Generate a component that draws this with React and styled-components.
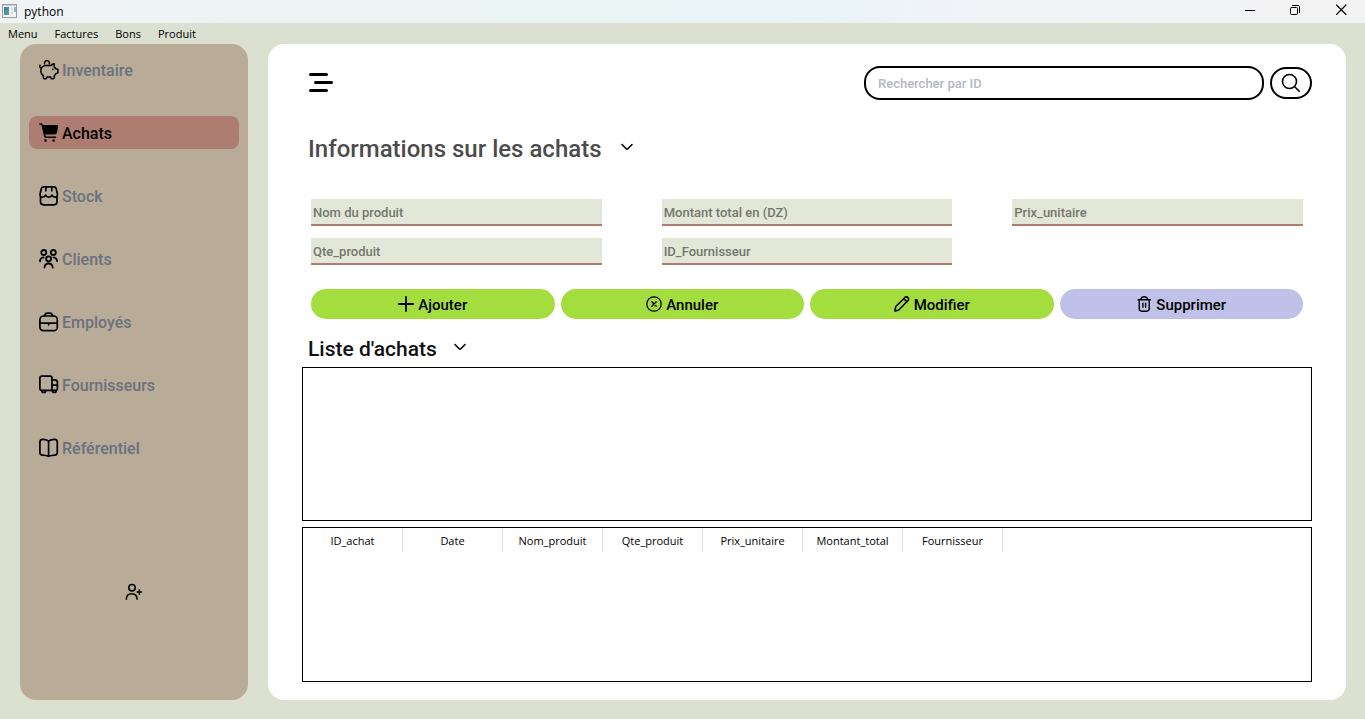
import React from "react";
import styled, { createGlobalStyle } from "styled-components";

const colors = {
  page: "#dce0d0",
  sidebar: "#b8ab98",
  accent: "#ad7d72",
  muted: "#6b717d",
  green: "#a3de3e",
  lilac: "#c0c1e8",
  field: "#e3e7d8",
};

const din = `Roboto, "Liberation Sans", sans-serif`;
const system = `"Open Sans", "Noto Sans", sans-serif`;

const GlobalStyle = createGlobalStyle`
  * { box-sizing: border-box; }
  body { margin: 0; background: ${colors.page}; font-family: ${din}; color: #000; }
  button, input { font: inherit; color: inherit; }
  svg { display: block; flex: none; }
`;

const Window = styled.div`
  min-height: 100vh;
  display: flex;
  flex-direction: column;
`;

const TitleBar = styled.header`
  height: 23px;
  display: flex;
  align-items: center;
  padding: 0 0 0 2px;
  background: linear-gradient(90deg, #f0f3f3 0%, #eaf4f5 45%, #ebf4f7 62%, #f1f3f7 72%, #f3f3f3 100%);
  font-family: ${system};
  font-size: 12px;
`;

const WindowName = styled.span`
  flex: 1;
  padding-left: 6px;
`;

const WindowButton = styled.button`
  width: 46px;
  height: 23px;
  padding: 0 0 3px;
  border: 0;
  background: none;
  display: flex;
  align-items: center;
  justify-content: center;
`;

const MenuBar = styled.nav`
  height: 21px;
  display: flex;
  align-items: center;
  gap: 17px;
  padding: 0 8px;
  font-family: ${system};
  font-size: 11px;
`;

const MenuLink = styled.a`
  color: #000;
  text-decoration: none;
`;

const Body = styled.div`
  flex: 1;
  display: flex;
  gap: 20px;
  padding: 0 19px 19px 20px;
`;

const Sidebar = styled.aside`
  flex: 0 0 228px;
  display: flex;
  flex-direction: column;
  align-items: center;
  padding: 9px;
  border-radius: 16px;
  background: ${colors.sidebar};
`;

const SideNav = styled.nav`
  align-self: stretch;
  display: flex;
  flex-direction: column;
  gap: 30px;
`;

const SideLink = styled.a`
  height: 33px;
  display: flex;
  align-items: center;
  gap: 3px;
  padding: 0 10px;
  border-radius: 8px;
  background: ${(p) => (p.$active ? colors.accent : "transparent")};
  color: ${(p) => (p.$active ? "#000" : colors.muted)};
  font-size: 16px;
  font-weight: 500;
  text-decoration: none;

  svg { color: #000; }
`;

const Label = styled.span`
  padding-top: 2px;
`;

const AddUser = styled.button`
  margin: auto 0 84px;
  padding: 6px;
  border: 0;
  background: none;
`;

const Main = styled.main`
  flex: 1;
  min-width: 0;
  display: flex;
  flex-direction: column;
  padding: 22px 34px 18px;
  border-radius: 16px;
  background: #fff;
`;

const TopRow = styled.div`
  display: flex;
  align-items: center;
  gap: 6px;
`;

const IconButton = styled.button`
  display: flex;
  padding: 0;
  border: 0;
  background: none;
`;

const MenuToggle = styled(IconButton)`
  margin: 0 auto 0 7px;
`;

const SearchInput = styled.input`
  width: 400px;
  height: 34px;
  padding: 0 12px;
  border: 2px solid #000;
  border-radius: 16px;
  background: #fff;
  font-size: 13px;
  font-weight: 500;
  outline: none;

  &::placeholder { color: #b5b8bf; opacity: 1; }
`;

const SearchButton = styled.button`
  width: 42px;
  height: 32px;
  display: flex;
  align-items: center;
  justify-content: center;
  padding: 0;
  border: 2px solid #000;
  border-radius: 16px;
  background: #fff;
`;

const HeadingRow = styled.div`
  display: flex;
  align-items: center;
  gap: ${(p) => (p.$small ? 16 : 18)}px;
  padding: 0 6px;
  margin: ${(p) => (p.$small ? "16px 0 4px" : "33px 0 34px")};
`;

const PageTitle = styled.h1`
  margin: 0;
  color: #4c4c4c;
  font-size: 24px;
  font-weight: 500;
  line-height: 32px;
`;

const ListTitle = styled.h2`
  margin: 0;
  color: #111;
  font-size: 21px;
  font-weight: 500;
  line-height: 28px;
`;

const Fields = styled.div`
  display: grid;
  grid-template-columns: repeat(3, 1fr);
  gap: 12px 60px;
  margin: 0 9px 24px;
`;

const Field = styled.input`
  width: 100%;
  min-width: 0;
  height: 27px;
  padding: 2px 2px 0;
  border: 0;
  border-bottom: 2px solid ${colors.accent};
  background: ${colors.field};
  font-size: 13px;
  font-weight: 500;
  outline: none;

  &::placeholder { color: #74776d; opacity: 1; }
`;

const Actions = styled.div`
  display: grid;
  grid-template-columns: repeat(4, 1fr);
  gap: 6px;
  margin: 0 9px;
`;

const ActionButton = styled.button`
  height: 30px;
  display: flex;
  align-items: center;
  justify-content: center;
  gap: 4px;
  padding: 0;
  border: 0;
  border-radius: 15px;
  background: ${(p) => (p.$lilac ? colors.lilac : colors.green)};
  font-size: 15px;
  font-weight: 500;
`;

const Panels = styled.div`
  flex: 1;
  display: grid;
  grid-template-rows: minmax(100px, 154fr) minmax(100px, 155fr);
  gap: 6px;
`;

const Panel = styled.section`
  overflow: hidden;
  border: 1px solid #000;
`;

const Table = styled.table`
  width: 700px;
  table-layout: fixed;
  border-collapse: separate;
  border-spacing: 0;
  font-family: ${system};
  font-size: 11px;
`;

const HeadCell = styled.th`
  height: 24px;
  padding: 0;
  border-right: 1px solid #e2e2e2;
  font-weight: 400;
  text-align: center;
`;

const Icon = ({ w = 20, h = 20, sw = 2, children }) => (
  <svg
    width={w}
    height={h}
    viewBox={`0 0 ${w} ${h}`}
    fill="none"
    stroke="currentColor"
    strokeWidth={sw}
    strokeLinecap="round"
    strokeLinejoin="round"
    aria-hidden="true"
  >
    {children}
  </svg>
);

const PiggyIcon = () => (
  <Icon sw={1.5}>
    <path d="M5.6 3.800A2.500 2.500 0 1 1 10.400 3.800" />
    <path d="M1 5.200C.3 6.600 1 7.900 2.500 7.900" />
    <path d="M7.200 5.500h5c.8-1.100 1.700-1.600 3-1.700v3c.9.7 1.400 1.500 1.700 2.300h1.300c.5 0 .7.200.7.700v2.600c0 .5-.2.800-.7.900l-1.400.4c-.4.9-.9 1.600-1.600 2.200v1.900c0 .7-.3 1-1 1h-1.200c-.5 0-.8-.2-1-.7l-.4-1H7.900l-.4 1c-.2.5-.5.7-1 .7H5.400c-.7 0-1-.3-1-1v-1.900C2.700 14.700 1.800 13 1.800 10.900c0-3.100 2.300-5.400 5.400-5.400z" />
    <path d="M13.900 9.100v.3" />
  </Icon>
);

const CartIcon = () => (
  <Icon sw={1.6}>
    <path d="M.9 1h1.200c.6 0 .9.3 1.100.9l2.700 11.300c.1.700.5 1 1.200 1h9.500" />
    <path d="M4 2.900h14.300l-.9 6c-.2 1.300-.9 1.900-2.200 1.900H5.800z" fill="currentColor" />
    <circle cx="6.500" cy="17.500" r="1.300" fill="currentColor" stroke="none" />
    <circle cx="14.600" cy="17.500" r="1.300" fill="currentColor" stroke="none" />
  </Icon>
);

const StoreIcon = () => (
  <Icon sw={1.7}>
    <path d="M4.600.9h10.300c1.200 0 2 .6 2.300 1.800l1.200 5.200c.4 1.800-.8 3.200-2.400 3.200-1.500 0-2.400-.8-3-2-.7 1.300-1.700 2-3.200 2s-2.600-.7-3.200-2c-.6 1.200-1.600 2-3.100 2-1.700 0-2.800-1.400-2.400-3.200l1.200-5.200C2.600 1.500 3.400.9 4.600.9z" />
    <path d="M6.800 1v3.700M12.800 1v3.700" />
    <path d="M1.500 10.500v5.300c0 2 1 3 3 3h10.500c2 0 3-1 3-3v-5.300" />
  </Icon>
);

const PeopleIcon = () => (
  <Icon sw={1.8}>
    <circle cx="4.800" cy="3.500" r="2.500" />
    <circle cx="14.300" cy="3.500" r="2.500" />
    <circle cx="9.600" cy="9.800" r="2.500" />
    <path d="M1 12.300C1.100 9.900 2.600 8.600 4.700 8.400M14.400 8.400c2.100.2 3.500 1.500 3.700 3.900" />
    <path d="M5.500 18.500c.2-2.700 1.700-4 4.100-4s3.900 1.300 4.100 4" />
  </Icon>
);

const BriefcaseIcon = () => (
  <Icon sw={1.7}>
    <rect x=".9" y="4" width="17.400" height="14.700" rx="3.500" />
    <path d="M5.600 3.800C6.100 2 7 1.200 8.400 1.200h2.400c1.400 0 2.300.8 2.800 2.600" />
    <path d="M1 11.200h17.200M9.600 11.800v1" />
  </Icon>
);

const TruckIcon = () => (
  <Icon sw={1.7}>
    <path d="M2.500 15.300c-1 0-1.600-.6-1.600-1.600V3c0-1.300.7-1.900 1.900-1.900h8.300c1.200 0 1.900.6 1.900 1.900v12.300z" />
    <path d="M13 4.800h2.800c1.700 0 2.600.9 2.600 2.600v6.300c0 1-.6 1.600-1.600 1.600H13M13.200 10.200h5" />
    <path d="M2.700 15.500a2 2 0 0 0 4 0M13.300 15.500a2 2 0 0 0 4 0" />
  </Icon>
);

const BookIcon = () => (
  <Icon sw={1.7}>
    <path d="M9.600 3.200C8 1.800 6 1.200 3.600 1.300 1.900 1.400.9 2.300.9 4v10.400c0 1.700.9 2.600 2.600 2.700 2.300.1 4.200.5 6.100 1.200 1.900-.7 3.800-1.100 6.100-1.200 1.700-.1 2.600-1 2.600-2.700V4c0-1.700-1-2.600-2.700-2.700C13.200 1.200 11.200 1.800 9.600 3.200zM9.600 3.200v15" />
  </Icon>
);

const AddUserIcon = () => (
  <Icon w={18} h={18} sw={1.5}>
    <circle cx="7" cy="4.800" r="3.200" />
    <path d="M1.300 16.300c.1-3.600 2.100-5.500 5.400-5.500s5.300 1.900 5.400 5.500" />
    <path d="M14.300 6.800v4.400M12.100 9h4.400" />
  </Icon>
);

const BarsIcon = () => (
  <Icon w={24} h={20} sw={3}>
    <path d="M1.500 1.500h16M6.500 9.500h16M1.500 17.500h16" />
  </Icon>
);

const SearchIcon = () => (
  <Icon w={20} h={20} sw={1.6}>
    <circle cx="8.500" cy="8.500" r="7" />
    <path d="M13.700 13.700l4.500 4.500" />
  </Icon>
);

const ChevronIcon = () => (
  <Icon w={14} h={14} sw={1.6}>
    <path d="M2 2.500l4.200 4.200c.5.500 1.100.5 1.600 0L12 2.500" />
  </Icon>
);

const PlusIcon = () => (
  <Icon w={16} h={16} sw={1.8}>
    <path d="M8 .9v14.200M.9 8h14.200" />
  </Icon>
);

const CancelIcon = () => (
  <Icon w={16} h={16} sw={1.3}>
    <circle cx="8" cy="8" r="7.200" />
    <path d="M5.800 5.800l4.400 4.400M10.200 5.800l-4.400 4.400" />
  </Icon>
);

const PencilIcon = () => (
  <Icon w={16} h={16} sw={1.6}>
    <path d="M1 15l.5-3.500c.1-.6.400-1.100.8-1.500L10.700 1.700c1-1 2.300-1.100 3.200-.1 1 .9.9 2.200-.1 3.200L5.500 13.300c-.4.4-.9.700-1.500.9z" />
    <path d="M9.800 2.800l3 3" />
  </Icon>
);

const TrashIcon = () => (
  <Icon w={16} h={16} sw={1.4}>
    <path d="M2 3.700h12.400M4.700 3.400C5.300 1.600 6.300.8 8.200.8s2.900.8 3.500 2.600" />
    <path d="M3.200 4v8.600c0 1.700.9 2.600 2.600 2.600h4.800c1.700 0 2.600-.9 2.600-2.600V4M6.900 7.300v4M9.600 7.300v4" />
  </Icon>
);

const AppIcon = () => (
  <svg width="16" height="15" viewBox="0 0 16 15" aria-hidden="true">
    <defs>
      <linearGradient id="pane" x1="0" y1="0" x2="1" y2="1">
        <stop offset="0" stopColor="#4273b4" />
        <stop offset="1" stopColor="#55ad83" />
      </linearGradient>
    </defs>
    <rect x=".5" y=".5" width="14" height="13" fill="#f4f5f6" stroke="#999ea3" />
    <rect x="1" y="1" width="13" height="1" fill="#c9d3dc" />
    <rect x="2" y="3" width="5" height="8" fill="url(#pane)" />
    <rect x="9" y="3" width="2" height="8" fill="#e2e3e6" />
    <rect x="12" y="3" width="2" height="5" fill="#8fb5bd" />
  </svg>
);

const sections = [
  ["Inventaire", PiggyIcon],
  ["Achats", CartIcon],
  ["Stock", StoreIcon],
  ["Clients", PeopleIcon],
  ["Employés", BriefcaseIcon],
  ["Fournisseurs", TruckIcon],
  ["Référentiel", BookIcon],
];

const fields = ["Nom du produit", "Montant total en (DZ)", "Prix_unitaire", "Qte_produit", "ID_Fournisseur"];

const actions = [
  ["Ajouter", PlusIcon],
  ["Annuler", CancelIcon],
  ["Modifier", PencilIcon],
  ["Supprimer", TrashIcon],
];

const columns = ["ID_achat", "Date", "Nom_produit", "Qte_produit", "Prix_unitaire", "Montant_total", "Fournisseur"];

export default function App() {
  return (
    <Window>
      <GlobalStyle />
      <TitleBar>
        <AppIcon />
        <WindowName>python</WindowName>
        <WindowButton aria-label="Réduire">
          <Icon w={12} h={12} sw={1}><path d="M1 6.500h10" strokeLinecap="butt" /></Icon>
        </WindowButton>
        <WindowButton aria-label="Restaurer">
          <Icon w={12} h={12} sw={1}>
            <rect x=".5" y="3.500" width="7" height="7" rx="1" />
            <path d="M2.500 1.500h5.500c1 0 1.500.5 1.500 1.500v5.500" />
          </Icon>
        </WindowButton>
        <WindowButton aria-label="Fermer">
          <Icon w={12} h={12} sw={1.1}><path d="M.5 1l9.500 9.500M10 1L.5 10.500" /></Icon>
        </WindowButton>
      </TitleBar>
      <MenuBar>
        {["Menu", "Factures", "Bons", "Produit"].map((name) => (
          <MenuLink key={name} href="#">{name}</MenuLink>
        ))}
      </MenuBar>
      <Body>
        <Sidebar>
          <SideNav>
            {sections.map(([name, SectionIcon]) => (
              <SideLink key={name} href="#" $active={name === "Achats"}>
                <SectionIcon />
                <Label>{name}</Label>
              </SideLink>
            ))}
          </SideNav>
          <AddUser aria-label="Ajouter un utilisateur"><AddUserIcon /></AddUser>
        </Sidebar>
        <Main>
          <TopRow>
            <MenuToggle aria-label="Menu latéral"><BarsIcon /></MenuToggle>
            <SearchInput type="search" aria-label="Rechercher par ID" placeholder="Rechercher par ID" />
            <SearchButton aria-label="Rechercher"><SearchIcon /></SearchButton>
          </TopRow>
          <HeadingRow>
            <PageTitle>Informations sur les achats</PageTitle>
            <IconButton aria-label="Replier le formulaire"><ChevronIcon /></IconButton>
          </HeadingRow>
          <Fields>
            {fields.map((name) => (
              <Field key={name} type="text" aria-label={name} placeholder={name} />
            ))}
          </Fields>
          <Actions>
            {actions.map(([name, ActionIcon]) => (
              <ActionButton key={name} $lilac={name === "Supprimer"}>
                <ActionIcon />
                <Label>{name}</Label>
              </ActionButton>
            ))}
          </Actions>
          <HeadingRow $small>
            <ListTitle>Liste d'achats</ListTitle>
            <IconButton aria-label="Replier la liste"><ChevronIcon /></IconButton>
          </HeadingRow>
          <Panels>
            <Panel />
            <Panel>
              <Table>
                <thead>
                  <tr>
                    {columns.map((name) => (
                      <HeadCell key={name} scope="col">{name}</HeadCell>
                    ))}
                  </tr>
                </thead>
              </Table>
            </Panel>
          </Panels>
        </Main>
      </Body>
    </Window>
  );
}
